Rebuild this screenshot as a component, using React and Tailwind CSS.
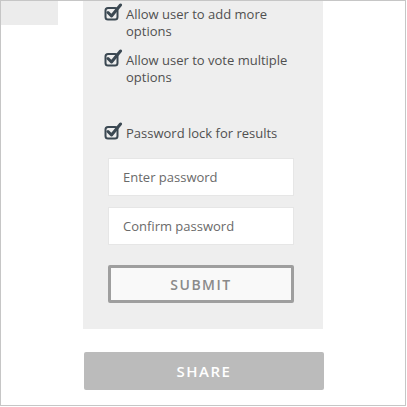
import React from 'react';

const CheckIcon = () => (
  <svg width="19" height="18" viewBox="0 0 19 18" className="shrink-0">
    <rect x="1.5" y="5" width="12" height="11.5" rx="2.5" fill="none" stroke="#3b4852" strokeWidth="2" />
    <path d="M4 9.5 L7.5 13 L16.5 2" fill="none" stroke="#3b4852" strokeWidth="3" strokeLinecap="round" strokeLinejoin="round" />
  </svg>
);

const Option = ({ label, className }) => (
  <div className={`flex items-start gap-[3px] ${className}`}>
    <div className="-mt-[3px]">
      <CheckIcon />
    </div>
    <p className="w-[168px] text-[13px] leading-[17px] text-[#505050]">{label}</p>
  </div>
);

export default function App() {
  return (
    <div
      className="w-[406px] h-[406px] border border-[#c6c6c6] bg-white overflow-hidden"
      style={{ fontFamily: '"Open Sans", Lato, sans-serif' }}
    >
      <div className="flex items-start">
        <div className="w-[57px] h-[24px] bg-[#ececec]" />
        <div className="ml-[25px] w-[240px] bg-[#eeeeee] pt-[5px] pb-[26px]">
          <div className="pl-[21px]">
            <Option label="Allow user to add more options" />
            <Option label="Allow user to vote multiple options" className="mt-[12px]" />
            <Option label="Password lock for results" className="mt-[39px]" />
          </div>
          <div className="pl-[25px] pr-[29px] mt-[16px] flex flex-col">
            <input
              type="password"
              placeholder="Enter password"
              className="h-[38px] bg-white border border-[#e6e6e6] px-[14px] text-[13px] placeholder-[#6a6a6a] outline-none"
            />
            <input
              type="password"
              placeholder="Confirm password"
              className="h-[38px] mt-[11px] bg-white border border-[#e6e6e6] px-[14px] text-[13px] placeholder-[#6a6a6a] outline-none"
            />
            <button className="h-[38px] mt-[20px] bg-[#f9f9f9] border-[3px] border-[#9e9e9e] rounded-[2px] text-[14px] font-semibold tracking-[1.5px] text-[#8a8a8a]">
              SUBMIT
            </button>
          </div>
        </div>
      </div>
      <div className="pl-[83px] mt-[23px]">
        <button className="w-[240px] h-[38px] bg-[#bbbbbb] rounded-[2px] text-white text-[15px] font-semibold tracking-[1.5px]">
          SHARE
        </button>
      </div>
    </div>
  );
}
